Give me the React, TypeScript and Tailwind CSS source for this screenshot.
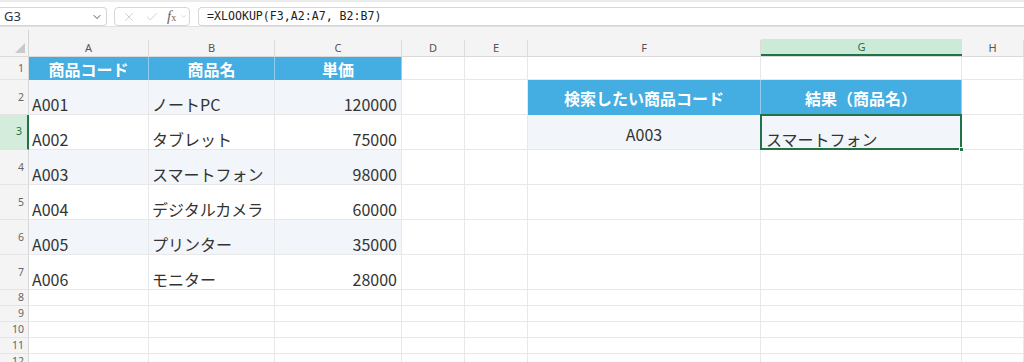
import React from 'react';
import { ChevronDown, X, Check } from 'lucide-react';

const COLS = ['A', 'B', 'C', 'D', 'E', 'F', 'G', 'H'];
const WIDTHS = ['w-[120px]', 'w-[126px]', 'w-[127px]', 'w-[63px]', 'w-[63px]', 'w-[233px]', 'w-[201px]', 'flex-1'];

type CellDef = {
  text?: string;
  kind?: 'head' | 'left' | 'right' | 'center' | 'selected';
  band?: boolean;
};

type RowDef = {
  num: number;
  h: string;
  cells: Record<string, CellDef>;
};

const products = [
  ['A001', 'ノートPC', '120000'],
  ['A002', 'タブレット', '75000'],
  ['A003', 'スマートフォン', '98000'],
  ['A004', 'デジタルカメラ', '60000'],
  ['A005', 'プリンター', '35000'],
  ['A006', 'モニター', '28000'],
];

const rows: RowDef[] = [
  {
    num: 1,
    h: 'h-[23px]',
    cells: {
      A: { text: '商品コード', kind: 'head' },
      B: { text: '商品名', kind: 'head' },
      C: { text: '単価', kind: 'head' },
    },
  },
  ...products.map((p, i) => {
    const band = i % 2 === 0;
    const cells: Record<string, CellDef> = {
      A: { text: p[0], kind: 'left', band },
      B: { text: p[1], kind: 'left', band },
      C: { text: p[2], kind: 'right', band },
    };
    if (i === 0) {
      cells.F = { text: '検索したい商品コード', kind: 'head' };
      cells.G = { text: '結果（商品名）', kind: 'head' };
    }
    if (i === 1) {
      cells.F = { text: 'A003', kind: 'center', band: true };
      cells.G = { text: 'スマートフォン', kind: 'selected', band: true };
    }
    return { num: i + 2, h: 'h-[35px]', cells };
  }),
  ...[8, 9, 10, 11, 12].map((n) => ({ num: n, h: 'h-[16px]', cells: {} })),
];

function GridCell({ col, def }: { col: number; def?: CellDef }) {
  const w = WIDTHS[col];
  if (def?.kind === 'head') {
    return (
      <div
        className={`${w} shrink-0 h-full flex items-center justify-center bg-[#44ade2] border-r border-[#8fcdee] text-white font-bold text-[16px] leading-none`}
      >
        {def.text}
      </div>
    );
  }
  const bg = def?.band ? 'bg-[#f2f5f9]' : 'bg-white';
  if (def?.kind === 'center') {
    return (
      <div className={`${w} shrink-0 h-full flex items-center justify-center pt-[4px] ${bg} border-r border-b border-[#e8e8e8] text-[16px] leading-none text-[#333]`}>
        {def.text}
      </div>
    );
  }
  if (def?.kind === 'selected') {
    return (
      <div className={`${w} shrink-0 h-full relative flex items-end pl-[5px] pb-[2px] ${bg} border-r border-b border-[#e8e8e8] text-[16px] leading-[16px] text-[#333]`}>
        {def.text}
        <div className="absolute -left-[1px] -top-[1px] -right-[1px] -bottom-[1px] border-2 border-[#217346]" />
        <div className="absolute -right-[3px] -bottom-[3px] w-[5px] h-[5px] bg-[#217346] border border-white" />
      </div>
    );
  }
  const align = def?.kind === 'right' ? 'justify-end pr-[4px]' : 'justify-start pl-[3px]';
  return (
    <div className={`${w} shrink-0 h-full flex items-end ${align} pb-[2px] ${bg} border-r border-b border-[#e8e8e8] text-[16px] leading-[16px] text-[#333]`}>
      {def?.text}
    </div>
  );
}

export default function App() {
  return (
    <div className="w-[1024px] h-[362px] overflow-hidden bg-white font-['Noto_Sans_CJK_JP','Noto_Sans',sans-serif]">
      {/* top strip */}
      <div className="h-[2px] bg-[#ececec]" />

      {/* formula toolbar */}
      <div className="h-[25px] flex items-start pt-[5px] border-b border-[#e1e1e1]">
        <div className="w-[107px] h-[19px] flex items-center justify-between pl-[4px] pr-[3px] border border-l-0 border-[#d6d6d6] rounded-r-[4px] text-[13px] text-[#333] font-['Noto_Sans',sans-serif]">
          <span>G3</span>
          <ChevronDown size={12} strokeWidth={2} className="text-[#555]" />
        </div>
        <div className="ml-[7px] w-[76px] h-[19px] flex items-center border border-[#d6d6d6] rounded-[4px] pl-[7px]">
          <X size={14} strokeWidth={1.2} className="text-[#bdbdbd]" />
          <Check size={14} strokeWidth={1.2} className="ml-[9px] text-[#bdbdbd]" />
          <span className="ml-[8px] italic font-['Liberation_Serif',serif] text-[15px] text-[#666] leading-none">
            f<span className="text-[10px] not-italic">x</span>
          </span>
          <ChevronDown size={7} strokeWidth={2} className="ml-[4px] text-[#c4c4c4]" />
        </div>
        <div className="ml-[8px] flex-1 h-[19px] flex items-center pl-[8px] border border-r-0 border-[#d6d6d6] rounded-l-[4px] font-['DejaVu_Sans_Mono',monospace] text-[11.6px] text-[#222]">
          =XLOOKUP(F3,A2:A7, B2:B7)
        </div>
      </div>

      {/* column headers */}
      <div className="h-[30px] flex bg-[#f4f4f4] border-b border-[#dadada] font-['Noto_Sans',sans-serif]">
        <div className="w-[29px] shrink-0 relative border-r border-[#d4d4d4] mt-[3px]">
          <svg className="absolute right-[3px] bottom-[3px]" width="10" height="10" viewBox="0 0 10 10">
            <polygon points="10,0 10,10 0,10" fill="#c9c9c9" />
          </svg>
        </div>
        {COLS.map((c, i) => (
          <div key={c} className={`${WIDTHS[i]} shrink-0 h-full flex items-end`}>
            {c === 'G' ? (
              <div className="w-full h-[17px] bg-[#cde9d8] border-b-2 border-[#217346] text-center text-[11px] leading-[15px] text-[#217346]">
                {c}
              </div>
            ) : (
              <div className="w-full h-[16px] border-r border-[#dcdcdc] text-center text-[11px] leading-[16px] text-[#555]">
                {c}
              </div>
            )}
          </div>
        ))}
      </div>

      {/* rows */}
      {rows.map((r) => (
        <div key={r.num} className={`${r.h} flex`}>
          {r.num === 3 ? (
            <div className="w-[29px] shrink-0 h-full flex items-center justify-end pr-[5px] bg-[#d3ecdc] border-r-2 border-[#217346] border-b border-b-[#e0e0e0] text-[10.5px] text-[#217346] font-['Noto_Sans',sans-serif]">
              {r.num}
            </div>
          ) : (
            <div className="w-[29px] shrink-0 h-full flex items-center justify-end pr-[4px] bg-[#f4f4f4] border-r border-[#d8d8d8] border-b border-b-[#e4e4e4] text-[10.5px] leading-none text-[#666] font-['Noto_Sans',sans-serif]">
              {r.num}
            </div>
          )}
          {COLS.map((c, i) => (
            <GridCell key={c} col={i} def={r.cells[c]} />
          ))}
        </div>
      ))}
    </div>
  );
}
